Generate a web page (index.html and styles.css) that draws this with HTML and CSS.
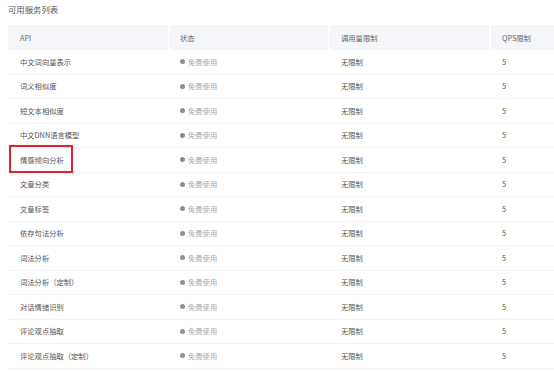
FILE: index.html
```html
<!DOCTYPE html>
<html lang="zh-CN">
<head>
  <meta charset="UTF-8">
  <title>可用服务列表</title>
  <link rel="stylesheet" href="styles.css">
</head>
<body>
  <div class="panel">
    <div class="panel-title">可用服务列表</div>

    <div class="service-table">
      <div class="row head">
        <div class="cell">API</div>
        <div class="cell">状态</div>
        <div class="cell">调用量限制</div>
        <div class="cell">QPS限制</div>
      </div>

      <div class="row"><div class="cell">中文词向量表示</div><div class="cell status"><i class="dot"></i>免费使用</div><div class="cell">无限制</div><div class="cell">5</div></div>
      <div class="row"><div class="cell">词义相似度</div><div class="cell status"><i class="dot"></i>免费使用</div><div class="cell">无限制</div><div class="cell">5</div></div>
      <div class="row"><div class="cell">短文本相似度</div><div class="cell status"><i class="dot"></i>免费使用</div><div class="cell">无限制</div><div class="cell">5</div></div>
      <div class="row"><div class="cell">中文DNN语言模型</div><div class="cell status"><i class="dot"></i>免费使用</div><div class="cell">无限制</div><div class="cell">5</div></div>
      <div class="row"><div class="cell marked">情感倾向分析<span class="mark-box"></span></div><div class="cell status"><i class="dot"></i>免费使用</div><div class="cell">无限制</div><div class="cell">5</div></div>
      <div class="row"><div class="cell">文章分类</div><div class="cell status"><i class="dot"></i>免费使用</div><div class="cell">无限制</div><div class="cell">5</div></div>
      <div class="row"><div class="cell">文章标签</div><div class="cell status"><i class="dot"></i>免费使用</div><div class="cell">无限制</div><div class="cell">5</div></div>
      <div class="row"><div class="cell">依存句法分析</div><div class="cell status"><i class="dot"></i>免费使用</div><div class="cell">无限制</div><div class="cell">5</div></div>
      <div class="row"><div class="cell">词法分析</div><div class="cell status"><i class="dot"></i>免费使用</div><div class="cell">无限制</div><div class="cell">5</div></div>
      <div class="row"><div class="cell">词法分析（定制）</div><div class="cell status"><i class="dot"></i>免费使用</div><div class="cell">无限制</div><div class="cell">5</div></div>
      <div class="row"><div class="cell">对话情绪识别</div><div class="cell status"><i class="dot"></i>免费使用</div><div class="cell">无限制</div><div class="cell">5</div></div>
      <div class="row"><div class="cell">评论观点抽取</div><div class="cell status"><i class="dot"></i>免费使用</div><div class="cell">无限制</div><div class="cell">5</div></div>
      <div class="row"><div class="cell">评论观点抽取（定制）</div><div class="cell status"><i class="dot"></i>免费使用</div><div class="cell">无限制</div><div class="cell">5</div></div>
    </div>
  </div>
</body>
</html>
```

FILE: styles.css
```css
html, body {
  margin: 0;
  padding: 0;
  background: #fff;
  overflow: hidden;
  font-family: "Noto Sans CJK SC", "Noto Sans", sans-serif;
  color: #555;
}

.panel {
  padding: 0 0 0 8px;
}

/* 标题 */
.panel-title {
  height: 25px;
  padding-top: 3px;
  box-sizing: border-box;
  font-size: 8.4px;
  line-height: 13px;
  color: #555;
}

/* 表格 */
.service-table {
  width: 546px;
}

.row {
  display: grid;
  grid-template-columns: 162px 160px 161px 1fr;
  height: 24.5px;
  box-sizing: border-box;
  border-bottom: 1px solid #eef0f4;
  font-size: 7.3px;
}

.row.head {
  height: 25px;
  border-bottom: none;
}

.cell {
  display: flex;
  align-items: center;
  padding-left: 12px;
  white-space: nowrap;
}

.row .cell:nth-child(2) {
  padding-left: 10px;
}

.row .cell:nth-child(3),
.row .cell:nth-child(4) {
  padding-left: 11px;
}

.head .cell {
  background: #f5f6fa;
  border-right: 2px solid #fff;
  color: #666;
}

.head .cell:last-child {
  border-right: none;
}

.status {
  color: #aaa;
}

.dot {
  display: inline-block;
  width: 5px;
  height: 5px;
  border-radius: 50%;
  background: #8e8e8e;
  margin-right: 3px;
}

/* 红框标注 */
.marked {
  position: relative;
}

.mark-box {
  position: absolute;
  left: 1px;
  top: -3.5px;
  width: 64px;
  height: 28.5px;
  box-sizing: border-box;
  border: 2px solid #e3222b;
}
```
